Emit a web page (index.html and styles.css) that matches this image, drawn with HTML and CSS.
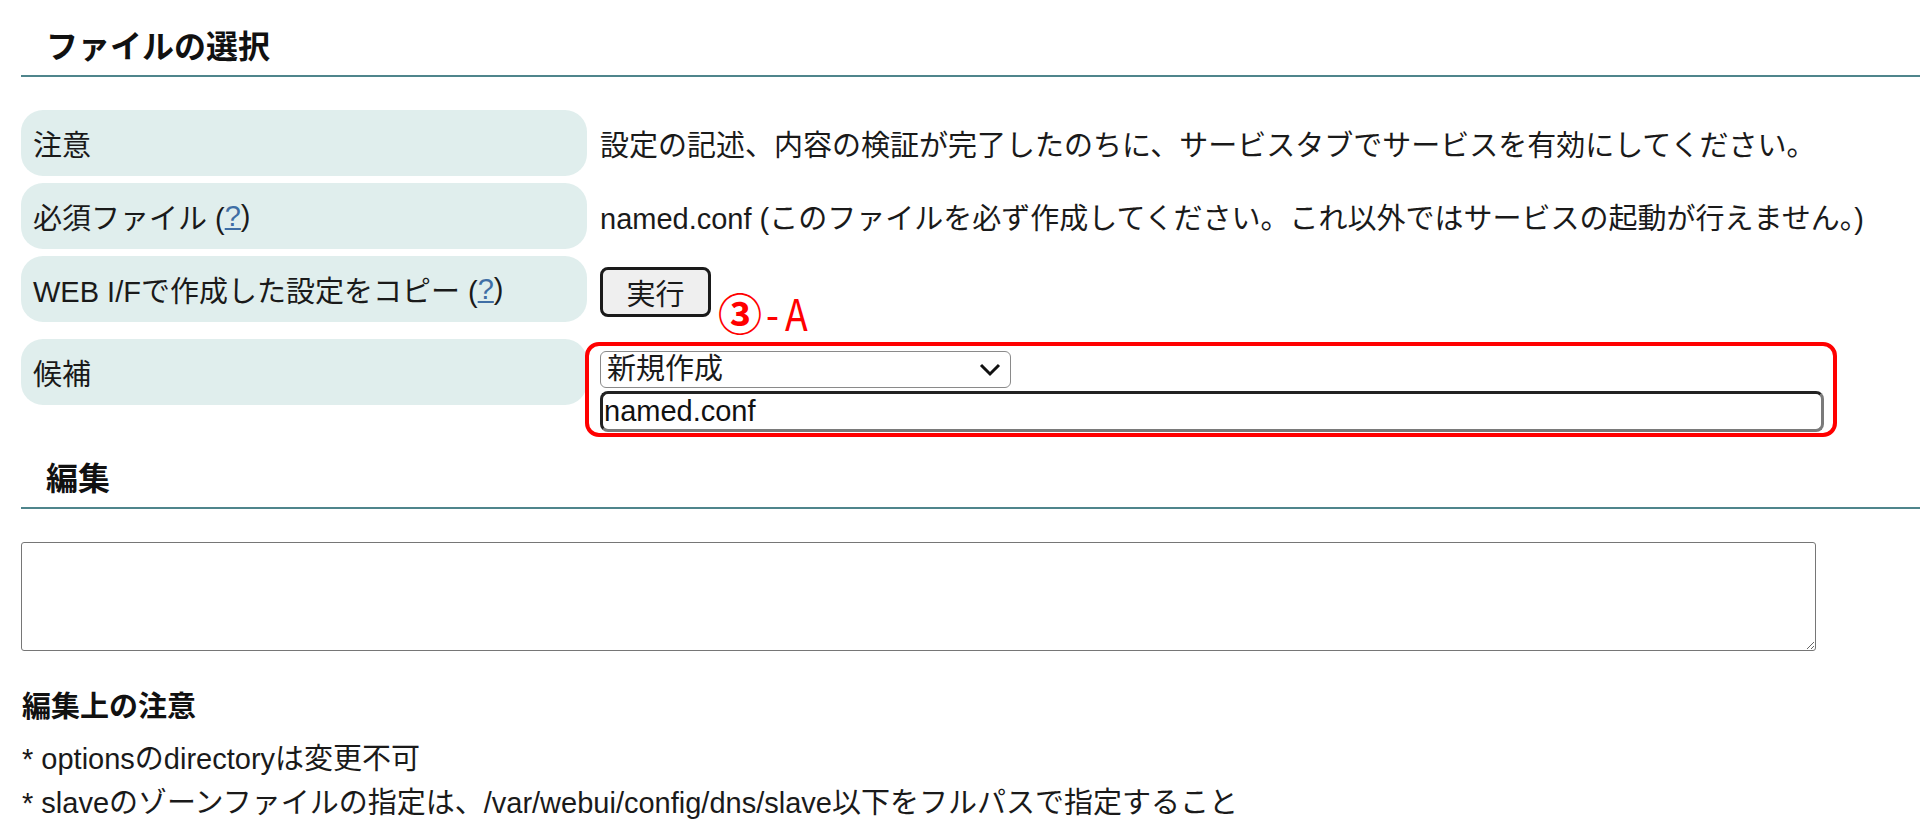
FILE: index.html
```html
<!DOCTYPE html>
<html lang="ja">
<head>
<meta charset="utf-8">
<title>ファイルの選択</title>
<link rel="stylesheet" href="styles.css">
</head>
<body>
<main class="page">
  <h2 class="section-title">ファイルの選択</h2>
  <div class="form">
    <div class="row">
      <div class="label">注意</div>
      <div class="value">設定の記述、内容の検証が完了したのちに、サービスタブでサービスを有効にしてください。</div>
    </div>
    <div class="row">
      <div class="label">必須ファイル (<a class="help" href="#">?</a>)</div>
      <div class="value">named.conf (このファイルを必ず作成してください。これ以外ではサービスの起動が行えません。)</div>
    </div>
    <div class="row">
      <div class="label">WEB I/Fで作成した設定をコピー (<a class="help" href="#">?</a>)</div>
      <div class="value"><button class="btn" type="button">実行</button></div>
    </div>
    <div class="row row-candidate">
      <div class="label">候補</div>
      <div class="value candidate">
        <span class="annot-label"><span class="annot-num">③</span><span class="annot-suffix">-A</span></span>
        <div class="annot-box"></div>
        <div class="select-wrap">
          <select class="select">
            <option>新規作成</option>
          </select>
          <svg class="chevron" width="22" height="14" viewBox="0 0 22 14"><path d="M2 2 L11 11 L20 2" fill="none" stroke="#111" stroke-width="3"/></svg>
        </div>
        <input class="name-input" type="text" value="named.conf">
      </div>
    </div>
  </div>
  <h2 class="section-title section-edit">編集</h2>
  <textarea class="editor"></textarea>
  <h3 class="notes-title">編集上の注意</h3>
  <p class="note">* optionsのdirectoryは変更不可</p>
  <p class="note">* slaveのゾーンファイルの指定は、/var/webui/config/dns/slave以下をフルパスで指定すること</p>
</main>
</body>
</html>
```

FILE: styles.css
```css
html, body {
  margin: 0;
  padding: 0;
  background: #ffffff;
}

body {
  font-family: "Liberation Sans", "Noto Sans CJK JP", sans-serif;
  font-size: 29px;
  color: #1a1a1a;
}

.page {
  padding-left: 21px;
}

.section-title {
  margin: 25px 0 0 0;
  padding: 0 0 6px 25px;
  font-size: 32px;
  line-height: 44px;
  font-weight: bold;
  border-bottom: 2px solid #4f858c;
  color: #111;
}

.form {
  margin-top: 33px;
  display: flex;
  flex-direction: column;
  gap: 7px;
}

.row {
  display: flex;
  align-items: stretch;
}

.label {
  width: 554px;
  height: 66px;
  padding-left: 12px;
  background: #e0eeed;
  border-radius: 22px;
  display: flex;
  align-items: center;
  white-space: nowrap;
  flex-shrink: 0;
}

.help {
  color: #3f6ea5;
  text-decoration: underline;
}

.value {
  padding-left: 13px;
  display: flex;
  align-items: center;
  white-space: nowrap;
}

.btn {
  width: 111px;
  height: 50px;
  margin-top: 6px;
  font-family: "Liberation Sans", "Noto Sans CJK JP", sans-serif;
  font-size: 29px;
  color: #1a1a1a;
  background: #efefef;
  border: 3px solid #1a1a1a;
  border-radius: 8px;
  padding: 0;
}

.row-candidate {
  margin-top: 10px;
}

.row-candidate .label {
  align-self: flex-start;
}

.candidate {
  position: relative;
  flex-direction: column;
  align-items: flex-start;
  padding-top: 12px;
}

.annot-label {
  position: absolute;
  left: 131px;
  top: -54px;
  color: #ff0000;
  font-family: "Noto Sans CJK JP", sans-serif;
  line-height: 54px;
  white-space: nowrap;
  display: flex;
  align-items: baseline;
}

.annot-num {
  font-size: 44px;
  font-weight: bold;
}

.annot-suffix {
  font-size: 44px;
  letter-spacing: 7px;
  margin-left: 4px;
  transform: scaleX(0.85);
  transform-origin: left center;
  display: inline-block;
}

.annot-box {
  position: absolute;
  left: -2px;
  top: 3px;
  width: 1244px;
  height: 87px;
  border: 4px solid #ff0000;
  border-radius: 14px;
  pointer-events: none;
}

.select-wrap {
  position: relative;
  width: 411px;
  height: 37px;
}

.select {
  appearance: none;
  -webkit-appearance: none;
  width: 411px;
  height: 37px;
  margin: 0;
  padding: 0 0 0 6px;
  font-family: "Liberation Sans", "Noto Sans CJK JP", sans-serif;
  font-size: 29px;
  line-height: 35px;
  color: #1a1a1a;
  background: #ffffff;
  border: 1px solid #8a8a8a;
  border-radius: 6px;
}

.chevron {
  position: absolute;
  right: 10px;
  top: 12px;
}

.name-input {
  width: 1224px;
  height: 41px;
  margin-top: 3px;
  box-sizing: border-box;
  padding: 0 0 0 1px;
  font-family: "Liberation Sans", "Noto Sans CJK JP", sans-serif;
  font-size: 29px;
  color: #111;
  background: #ffffff;
  border: 3px solid;
  border-color: #222222 #7a7a7a #7a7a7a #222222;
  border-radius: 8px;
  outline: none;
}

.section-edit {
  margin-top: 25px;
}

.editor {
  display: block;
  margin-top: 33px;
  width: 1795px;
  height: 109px;
  box-sizing: border-box;
  border: 1px solid #767676;
  border-radius: 3px;
  resize: both;
  font-family: "Liberation Mono", monospace;
}

.notes-title {
  margin: 36px 0 0 1px;
  font-size: 29px;
  line-height: 40px;
  font-weight: bold;
  color: #111;
}

.note {
  margin: 0 0 0 1px;
  line-height: 44px;
}

.notes-title + .note {
  margin-top: 10px;
}
```
